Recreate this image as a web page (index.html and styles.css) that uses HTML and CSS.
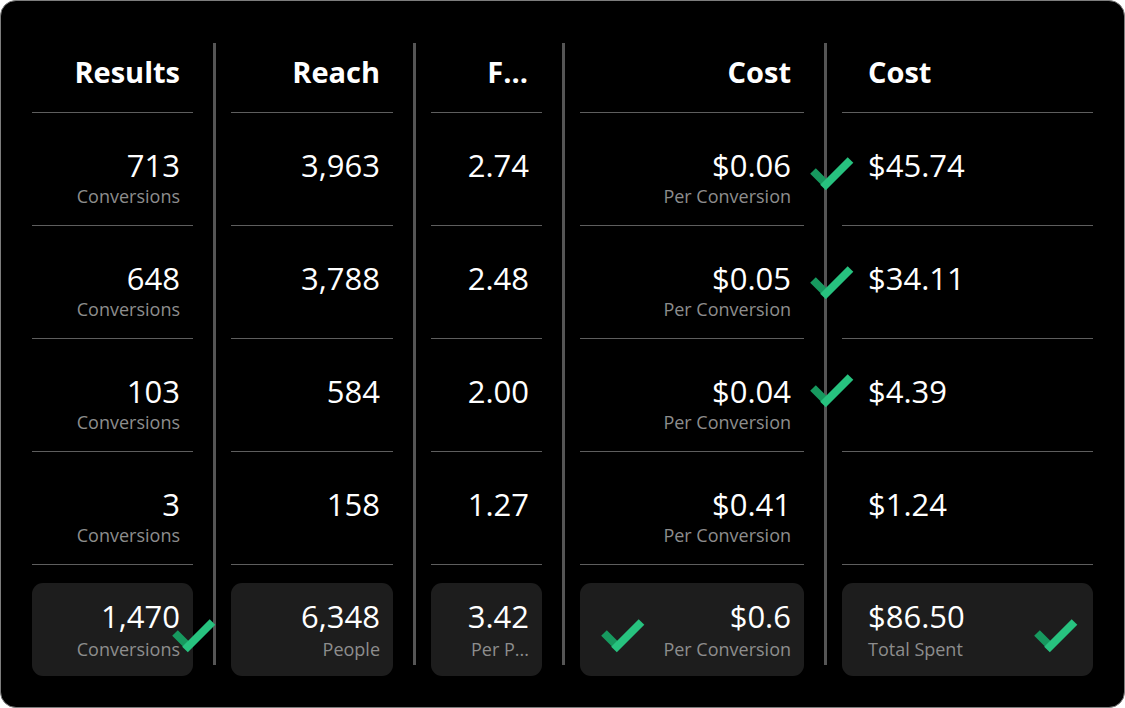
FILE: index.html
```html
<!DOCTYPE html>
<html>
<head>
<meta charset="utf-8">
<link rel="stylesheet" href="styles.css">
</head>
<body>
<div class="panel">
  <div class="col c1">
    <div class="head">Results</div>
    <div class="row"><div class="num">713</div><div class="sub">Conversions</div></div>
    <div class="row"><div class="num">648</div><div class="sub">Conversions</div></div>
    <div class="row"><div class="num">103</div><div class="sub">Conversions</div></div>
    <div class="row"><div class="num">3</div><div class="sub">Conversions</div></div>
    <div class="total">
      <div class="num">1,470</div><div class="sub">Conversions</div>
      <svg class="check check-t1" viewBox="0 0 44 35" width="44" height="35"><line x1="3" y1="14" x2="18" y2="29" stroke="#17995f" stroke-width="8"/><line x1="40.5" y1="3" x2="13" y2="30.5" stroke="#27c27f" stroke-width="8"/></svg>
    </div>
  </div>
  <div class="divider"></div>
  <div class="col c2">
    <div class="head">Reach</div>
    <div class="row"><div class="num">3,963</div></div>
    <div class="row"><div class="num">3,788</div></div>
    <div class="row"><div class="num">584</div></div>
    <div class="row"><div class="num">158</div></div>
    <div class="total"><div class="num">6,348</div><div class="sub">People</div></div>
  </div>
  <div class="divider"></div>
  <div class="col c3">
    <div class="head">F...</div>
    <div class="row"><div class="num">2.74</div></div>
    <div class="row"><div class="num">2.48</div></div>
    <div class="row"><div class="num">2.00</div></div>
    <div class="row"><div class="num">1.27</div></div>
    <div class="total"><div class="num">3.42</div><div class="sub">Per P...</div></div>
  </div>
  <div class="divider"></div>
  <div class="col c4">
    <div class="head">Cost</div>
    <div class="row"><div class="num">$0.06</div><div class="sub">Per Conversion</div></div>
    <div class="row"><div class="num">$0.05</div><div class="sub">Per Conversion</div></div>
    <div class="row"><div class="num">$0.04</div><div class="sub">Per Conversion</div></div>
    <div class="row"><div class="num">$0.41</div><div class="sub">Per Conversion</div></div>
    <div class="total">
      <div class="num">$0.6</div><div class="sub">Per Conversion</div>
      <svg class="check check-t4" viewBox="0 0 44 35" width="44" height="35"><line x1="3" y1="14" x2="18" y2="29" stroke="#17995f" stroke-width="8"/><line x1="40.5" y1="3" x2="13" y2="30.5" stroke="#27c27f" stroke-width="8"/></svg>
    </div>
  </div>
  <div class="divider"></div>
  <div class="col c5">
    <div class="head">Cost</div>
    <div class="row">
      <div class="num">$45.74</div>
      <svg class="check check-r1" viewBox="0 0 44 35" width="44" height="35"><line x1="3" y1="14" x2="18" y2="29" stroke="#17995f" stroke-width="8"/><line x1="40.5" y1="3" x2="13" y2="30.5" stroke="#27c27f" stroke-width="8"/></svg>
    </div>
    <div class="row">
      <div class="num">$34.11</div>
      <svg class="check check-r2" viewBox="0 0 44 35" width="44" height="35"><line x1="3" y1="14" x2="18" y2="29" stroke="#17995f" stroke-width="8"/><line x1="40.5" y1="3" x2="13" y2="30.5" stroke="#27c27f" stroke-width="8"/></svg>
    </div>
    <div class="row">
      <div class="num">$4.39</div>
      <svg class="check check-r3" viewBox="0 0 44 35" width="44" height="35"><line x1="3" y1="14" x2="18" y2="29" stroke="#17995f" stroke-width="8"/><line x1="40.5" y1="3" x2="13" y2="30.5" stroke="#27c27f" stroke-width="8"/></svg>
    </div>
    <div class="row"><div class="num">$1.24</div></div>
    <div class="total">
      <div class="num">$86.50</div><div class="sub">Total Spent</div>
      <svg class="check check-t5" viewBox="0 0 44 35" width="44" height="35"><line x1="3" y1="14" x2="18" y2="29" stroke="#17995f" stroke-width="8"/><line x1="40.5" y1="3" x2="13" y2="30.5" stroke="#27c27f" stroke-width="8"/></svg>
    </div>
  </div>
</div>
</body>
</html>
```

FILE: styles.css
```css
html, body {
  margin: 0;
  padding: 0;
  background: #ffffff;
}

body {
  font-family: "Open Sans", "Liberation Sans", sans-serif;
  color: #ffffff;
}

.panel {
  box-sizing: border-box;
  width: 1125px;
  height: 708px;
  background: #000000;
  border: 1px solid #7d7d7d;
  border-radius: 16px;
  padding: 42px 31px 31px 31px;
  display: flex;
  align-items: stretch;
}

.divider {
  width: 3px;
  background: #555555;
  margin: 0 15px 11px 20px;
  flex: none;
}

.col {
  display: flex;
  flex-direction: column;
  flex: none;
  text-align: right;
}

.c1 { width: 161px; }
.c2 { width: 162px; }
.c3 { width: 111px; }
.c4 { width: 224px; }
.c5 { width: 251px; text-align: left; }

.head {
  box-sizing: border-box;
  height: 70px;
  padding: 9px 13px 0 13px;
  line-height: 40px;
  font-size: 29px;
  font-weight: 700;
  border-bottom: 1px solid #5e5e5e;
  white-space: nowrap;
}

.c3 .head { padding-right: 14px; }

.row {
  position: relative;
  box-sizing: border-box;
  height: 113px;
  padding: 34px 13px 0 13px;
  border-bottom: 1px solid #5e5e5e;
}

.c5 .head,
.c5 .row,
.c5 .total {
  padding-left: 26px;
}

.num {
  font-size: 31px;
  line-height: 36px;
  font-weight: 400;
  white-space: nowrap;
}

.sub {
  margin-top: 2px;
  font-size: 18px;
  line-height: 22px;
  color: #8d8d8d;
  white-space: nowrap;
}

.total {
  position: relative;
  box-sizing: border-box;
  margin-top: 18px;
  height: 93px;
  padding: 15px 13px 0 13px;
  background: #1d1d1d;
  border-radius: 11px;
}

.total .sub {
  margin-top: 4px;
}

.check {
  position: absolute;
  display: block;
}

.check-r1 { left: -32px; top: 44px; }
.check-r2 { left: -32px; top: 40px; }
.check-r3 { left: -32px; top: 35px; }
.check-t1 { left: 140px; top: 36px; }
.check-t4 { left: 21px; top: 36px; }
.check-t5 { right: 15px; top: 36px; }
```
